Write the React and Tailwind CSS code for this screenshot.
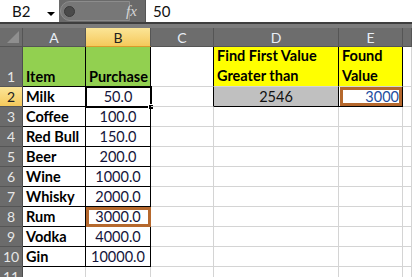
import React from "react";

const font = { fontFamily: "Lato, 'Liberation Sans', sans-serif" };

function Cell({ className = "", children, r = "grid", b = "grid" }) {
  const rc = r === "black" ? "border-r-black" : "border-r-[#d4d4d4]";
  const bc = b === "black" ? "border-b-black" : "border-b-[#d4d4d4]";
  return (
    <div className={`relative border-r border-b ${rc} ${bc} flex items-end overflow-visible whitespace-nowrap ${className}`}>
      {children}
    </div>
  );
}

function RowHead({ n, sel }) {
  return (
    <div
      className={`border-r border-b border-r-[#4e4e4e] border-b-[#555] flex items-end justify-center text-[14px] leading-[19px] ${
        sel ? "bg-gradient-to-b from-[#fbe596] to-[#f5c95a] text-[#222]" : "bg-[#6b6b6b] text-[#e6e6e6]"
      }`}
    >
      {n}
    </div>
  );
}

function ColHead({ l, sel }) {
  return (
    <div
      className={`border-r border-b border-r-[#555] flex items-center justify-center text-[14px] ${
        sel ? "bg-gradient-to-b from-[#fbe596] to-[#f5c95a] text-[#222] border-b-[#d99a2b]" : "bg-[#6d6d6d] text-[#e8eef6] border-b-[#555]"
      }`}
    >
      {l}
    </div>
  );
}

const data = [
  ["Milk", "50.0"],
  ["Coffee", "100.0"],
  ["Red Bull", "150.0"],
  ["Beer", "200.0"],
  ["Wine", "1000.0"],
  ["Whisky", "2000.0"],
  ["Rum", "3000.0"],
  ["Vodka", "4000.0"],
  ["Gin", "10000.0"],
];

export default function App() {
  return (
    <div className="w-[412px] h-[277px] overflow-hidden bg-white" style={font}>
      {/* formula bar */}
      <div className="flex h-[22px] bg-white">
        <div className="w-[59px] relative flex items-center pl-[12px] text-[15px] text-[#111]">
          B2
          <div className="absolute left-[47px] top-[12px] w-0 h-0 border-l-[4px] border-r-[4px] border-t-[4px] border-l-transparent border-r-transparent border-t-black" />
        </div>
        <div className="w-[86px] bg-[#6a6a6a] flex items-center">
          <div className="ml-[1px] h-[20px] w-[70px] rounded-l-full bg-[#777] border border-[#8c8c8c] flex items-center pl-[3px]">
            <div className="w-[11px] h-[11px] rounded-full bg-[#4a4a4a] border border-[#3a3a3a]" />
          </div>
          <span className="ml-[-4px] text-[#d6d6d6] italic text-[15px]" style={{ fontFamily: "'Liberation Serif', serif" }}>
            fx
          </span>
        </div>
        <div className="flex-1 flex items-center pl-[7px] text-[15px] text-[#111] border-l border-[#555]">50</div>
      </div>
      <div className="h-[2px] bg-[#3e3e3e]" />
      <div className="h-[4px] bg-[#7c7c7c]" />
      {/* grid */}
      <div className="grid grid-cols-[23px_63px_65px_63px_125px_64px_1fr] grid-rows-[19px_40px_repeat(10,20px)] text-[14.5px] leading-[19px]">
        {/* header row */}
        <div className="bg-[#6d6d6d] border-r border-b border-r-[#555] border-b-[#555] relative">
          <div className="absolute right-[3px] bottom-[3px] w-0 h-0 border-b-[12px] border-l-[12px] border-b-[#8f8f8f] border-l-transparent" />
        </div>
        <ColHead l="A" />
        <ColHead l="B" sel />
        <ColHead l="C" />
        <ColHead l="D" />
        <ColHead l="E" />
        <ColHead l="" />

        {/* row 1 */}
        <RowHead n="1" />
        <Cell className="bg-[#92d050] font-bold pl-[3px] text-black" r="black" b="black">
          Item
        </Cell>
        <Cell className="bg-[#92d050] font-bold pl-[3px] text-black" r="black" b="black">
          Purchase
        </Cell>
        <Cell r="black">{""}</Cell>
        <Cell className="bg-[#ffff00] font-bold pl-[3px] text-black leading-[20px] items-start flex-col justify-end" r="black">
          <span>Find First Value</span>
          <span>Greater than</span>
        </Cell>
        <Cell className="bg-[#ffff00] font-bold pl-[3px] text-black leading-[20px] flex-col justify-end items-start" r="black">
          <span>Found</span>
          <span>Value</span>
        </Cell>
        <Cell />

        {data.map(([item, val], i) => {
          const row = i + 2;
          return (
            <React.Fragment key={row}>
              <RowHead n={row} sel={row === 2} />
              <Cell className="font-bold pl-[3px] text-black" r="black" b="black">
                {item}
              </Cell>
              <Cell className="justify-center text-[#14143a]" r="black" b="black">
                {val}
                {row === 2 && (
                  <>
                    <div className="absolute left-[-1px] top-[-1px] right-[-2px] bottom-[-2px] border-2 border-black" />
                    <div className="absolute right-[-4px] bottom-[-4px] w-[6px] h-[6px] bg-black border border-white" />
                  </>
                )}
                {row === 8 && (
                  <div className="absolute left-[0px] top-[0px] right-[-1px] bottom-[-1px] border-[3px] border-[#b5682d]" />
                )}
              </Cell>
              {row === 2 ? (
                <>
                  <Cell r="black" />
                  <Cell className="bg-[#c0c0c0] justify-center text-[#111]" r="black" b="black">
                    2546
                  </Cell>
                  <Cell className="justify-end pr-[3px] text-[#1f4ea0]" r="black" b="black">
                    3000
                    <div className="absolute left-[1px] top-[0px] right-[0px] bottom-[0px] border-[3px] border-[#b5682d]" />
                  </Cell>
                  <Cell />
                </>
              ) : (
                <>
                  <Cell />
                  <Cell />
                  <Cell />
                  <Cell />
                </>
              )}
            </React.Fragment>
          );
        })}
        <RowHead n="11" />
        <Cell />
        <Cell />
        <Cell />
        <Cell />
        <Cell />
        <Cell />
      </div>
    </div>
  );
}
